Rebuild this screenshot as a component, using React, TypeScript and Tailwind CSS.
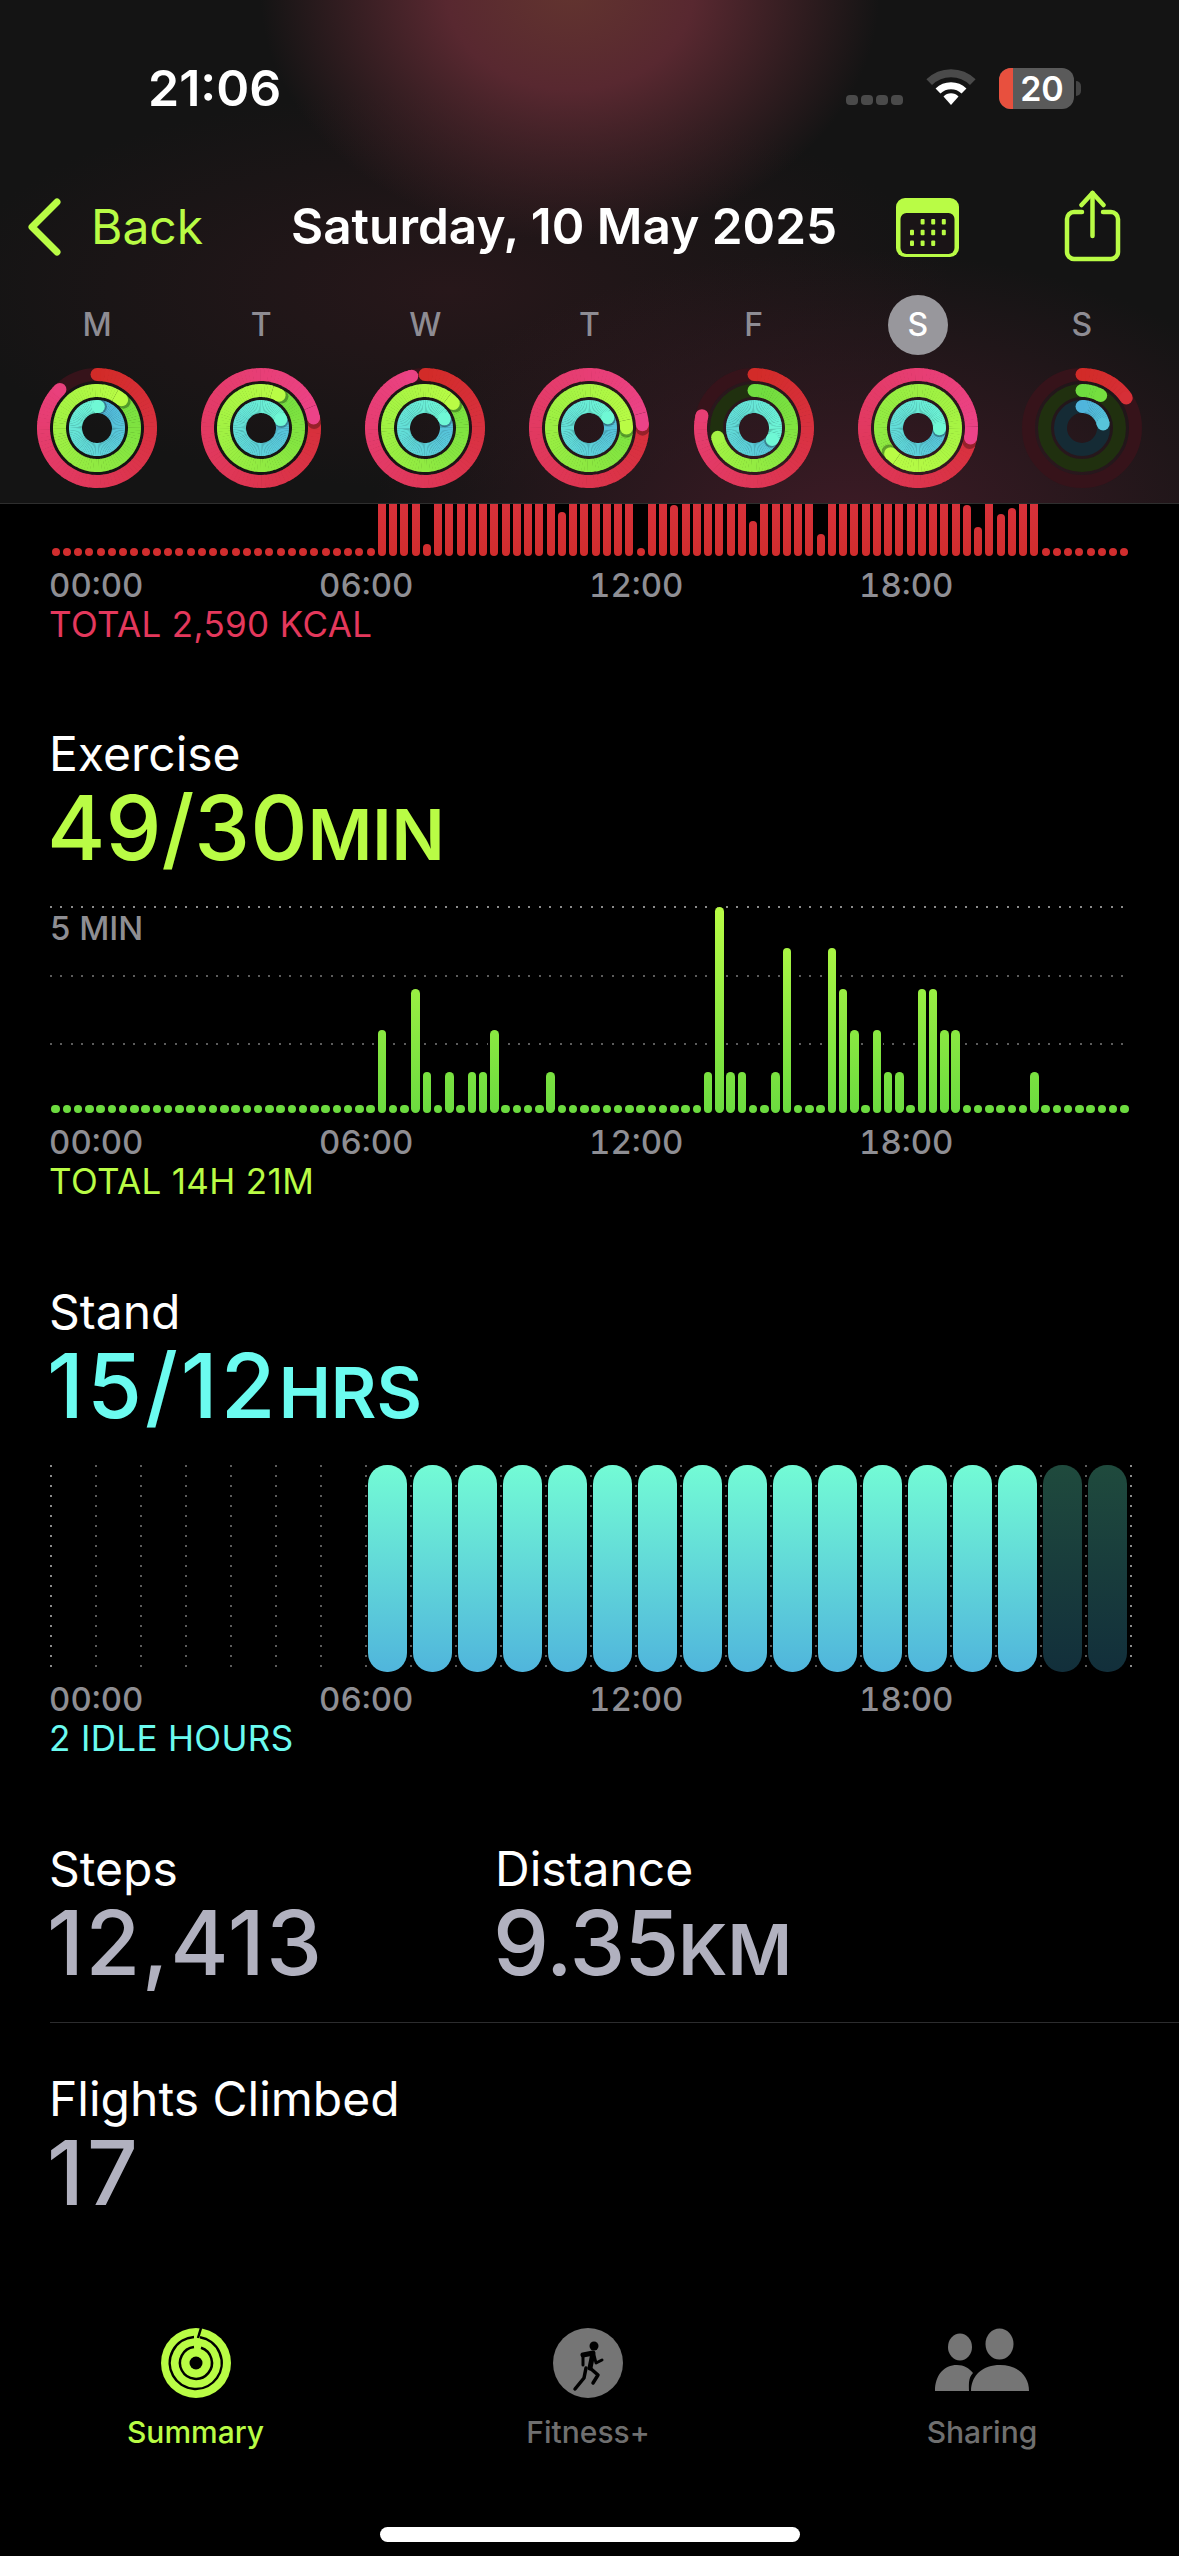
import * as React from 'react';

type RingSpec = { frac: number; from: string; to: string; track: string };

const LIME = '#b9fc45';

const mix = (a: string, b: string, t: number) => {
  const pa = [1, 3, 5].map((i) => parseInt(a.slice(i, i + 2), 16));
  const pb = [1, 3, 5].map((i) => parseInt(b.slice(i, i + 2), 16));
  return `rgb(${pa.map((v, i) => Math.round(v + (pb[i] - v) * t)).join(',')})`;
};

const polar = (r: number, turns: number): [number, number] => {
  const a = turns * Math.PI * 2;
  return [60 + r * Math.sin(a), 60 - r * Math.cos(a)];
};

function Ring({ r, spec }: { r: number; spec: RingSpec }) {
  const { frac, from, to, track } = spec;
  const start = Math.max(0, frac - 1);
  const span = Math.max(frac, 1);
  const step = 1 / 90;
  const segs: React.ReactNode[] = [];
  const tail = frac >= 1 ? frac - step * 3 : frac;
  for (let a = start; a < tail; a += step) {
    const [x1, y1] = polar(r, a);
    const [x2, y2] = polar(r, Math.min(a + step * 1.15, tail));
    segs.push(<path key={a} d={`M${x1} ${y1}A${r} ${r} 0 0 1 ${x2} ${y2}`} stroke={mix(from, to, a / span)} strokeWidth={13} fill="none" />);
  }
  const [sx, sy] = polar(r, start);
  const [tx, ty] = polar(r, frac);
  const [shx, shy] = polar(r, frac + 0.012);
  const [bx, by] = polar(r, tail);
  return (
    <g>
      <circle cx={60} cy={60} r={r} stroke={track} strokeWidth={13} fill="none" />
      {frac < 1 && <circle cx={sx} cy={sy} r={6.5} fill={from} />}
      {segs}
      {frac >= 1 && <circle cx={shx} cy={shy} r={7} fill="#000" opacity={0.3} />}
      {frac >= 1 && <path d={`M${bx} ${by}A${r} ${r} 0 0 1 ${tx} ${ty}`} stroke={to} strokeWidth={13} fill="none" />}
      <circle cx={tx} cy={ty} r={6.5} fill={frac >= 1 ? to : mix(from, to, frac / span)} />
    </g>
  );
}

function Rings({ move, ex, stand }: { move: number; ex: number; stand: number }) {
  return (
    <svg width={120} height={120} viewBox="0 0 120 120" className="block">
      <Ring r={53.5} spec={{ frac: move, from: '#d22b28', to: '#ec4388', track: '#36131a' }} />
      <Ring r={37.5} spec={{ frac: ex, from: '#6fdc3f', to: LIME, track: '#20300f' }} />
      <Ring r={21.5} spec={{ frac: stand, from: '#50b5dc', to: '#6ff8d5', track: '#152b35' }} />
    </svg>
  );
}

const days = [
  { l: 'M', move: 0.878, ex: 1.114, stand: 1.01 },
  { l: 'T', move: 1.22, ex: 1.08, stand: 1.186 },
  { l: 'W', move: 0.96, ex: 1.136, stand: 1.18 },
  { l: 'T', move: 1.24, ex: 1.25, stand: 1.17 },
  { l: 'F', move: 0.787, ex: 0.71, stand: 1.34 },
  { l: 'S', move: 1.28, ex: 1.63, stand: 1.255, active: true },
  { l: 'S', move: 0.155, ex: 0.083, stand: 0.22 },
];

const redShort: Record<number, number> = { 33: 12, 45: 44, 55: 51, 62: 35, 68: 22, 81: 51, 82: 29, 84: 42, 85: 48 };
const redDots = [52, 88, 89, 90, 91, 92, 93, 94, 95];
const greenBars: Record<number, number> = {
  29: 2, 32: 3, 33: 1, 35: 1, 37: 1, 38: 1, 39: 2, 44: 1, 58: 1, 59: 5, 60: 1, 61: 1, 64: 1, 65: 4,
  69: 4, 70: 3, 71: 2, 73: 2, 74: 1, 75: 1, 77: 3, 78: 3, 79: 2, 80: 2, 87: 1,
};
const quarters = Array.from({ length: 96 }, (_, i) => i);

function Axis() {
  return (
    <div className="ml-[-1px] grid h-[40px] w-[1080px] grid-cols-4 items-center text-[33px] font-medium tabular-nums text-[#8e8e93]">
      <span>00:00</span>
      <span>06:00</span>
      <span>12:00</span>
      <span>18:00</span>
    </div>
  );
}

function Value({ v, unit, className, numClass = '' }: { v: string; unit?: string; className: string; numClass?: string }) {
  return (
    <div className={`ml-[-3px] flex h-[88px] items-baseline font-medium leading-[88px] ${className}`}>
      <span className={`text-[89px] ${numClass}`}>{v}</span>
      {unit && <span className="text-[70px] font-semibold">{unit}</span>}
    </div>
  );
}

function Label({ children }: { children: React.ReactNode }) {
  return <div className="ml-[-1px] flex h-[60px] items-center text-[48px] text-white">{children}</div>;
}

function Total({ children, className }: { children: React.ReactNode; className: string }) {
  return <div className={`ml-[-1px] mt-[3px] flex h-[41px] items-center text-[35px] tracking-[0.01em] ${className}`}>{children}</div>;
}

function Status() {
  return (
    <div className="flex h-[176px] items-center pl-[148px] pr-[98px] text-white">
      <span className="text-[50px] font-semibold">21:06</span>
      <div className="ml-auto flex items-center">
        <div className="mt-[24px] flex gap-[3px]">
          {[0, 1, 2, 3].map((i) => (
            <span key={i} className="h-[10px] w-[12px] rounded-[4px] bg-[#4a4a4a]" />
          ))}
        </div>
        <svg width={50} height={38} viewBox="0 0 50 38" className="ml-[23px] mt-[-2px]">
          <path d="M3.2 14.2A31 31 0 0 1 46.8 14.2" stroke="#4a4a4a" strokeWidth={8} fill="none" />
          <path d="M12 23A18.5 18.5 0 0 1 38 23" stroke="#fff" strokeWidth={7} fill="none" />
          <path d="M25 37L17.5 28.5A10.5 10.5 0 0 1 32.5 28.5Z" fill="#fff" />
        </svg>
        <div className="ml-[23px] flex h-[41px] w-[75px] overflow-hidden rounded-[12px] bg-[#5a5a5a]">
          <span className="w-[14px] bg-[#e8503e]" />
          <span className="flex-1 pr-[3px] text-center text-[34px] font-semibold leading-[41px]">20</span>
        </div>
        <span className="ml-[2px] h-[15px] w-[5px] rounded-r-full bg-[#444]" />
      </div>
    </div>
  );
}

function CalendarIcon() {
  const rows = [
    [1, 2, 3],
    [0, 1, 2, 3],
    [0, 1, 2],
  ];
  return (
    <svg width={63} height={59} viewBox="0 0 63 59">
      <rect width={63} height={59} rx={9} fill={LIME} />
      <rect x={4.5} y={15} width={54} height={41} rx={6} fill="#1a1416" />
      {rows.map((cols, y) =>
        cols.map((x) => <rect key={`${x}-${y}`} x={14 + x * 10.6} y={21 + y * 10.7} width={4} height={5.5} rx={1} fill={LIME} />),
      )}
    </svg>
  );
}

function ShareIcon() {
  return (
    <svg width={57} height={72} viewBox="0 0 57 72" fill="none" stroke={LIME} strokeWidth={4.5} strokeLinecap="round" strokeLinejoin="round">
      <path d="M18 22H10a7 7 0 0 0-7 7v33a7 7 0 0 0 7 7h37a7 7 0 0 0 7-7V29a7 7 0 0 0-7-7h-8" />
      <path d="M28.5 3V46" />
      <path d="M17.5 15L28.5 3L39.5 15" />
    </svg>
  );
}

function Header() {
  return (
    <header className="h-[504px] border-b border-[#2e2e2e] bg-[radial-gradient(ellipse_310px_250px_at_570px_-10px,#62342f,#582830_40%,transparent),radial-gradient(ellipse_480px_280px_at_850px_530px,#3e1b26,transparent),radial-gradient(ellipse_500px_200px_at_450px_290px,#27171a,transparent),linear-gradient(#141414,#141414)]">
      <Status />
      <div className="flex h-[102px] items-center">
        <div className="flex w-[292px] items-center pl-[28px]">
          <svg width={34} height={58} viewBox="0 0 34 58" fill="none" stroke={LIME} strokeWidth={7} strokeLinecap="round" strokeLinejoin="round">
            <path d="M29 4L4 29L29 54" />
          </svg>
          <span className="ml-[29px] text-[48px] leading-none text-[#b9fc45]">Back</span>
        </div>
        <h1 className="ml-[-1px] w-[605px] text-[49.5px] font-semibold leading-none text-white">Saturday, 10 May 2025</h1>
        <CalendarIcon />
        <div className="ml-[105px] mt-[-3px]">
          <ShareIcon />
        </div>
      </div>
      <div className="mt-[17px] grid grid-cols-7 px-[15px]">
        {days.map((d, i) => (
          <div key={i} className="flex flex-col items-center">
            <span className={`flex h-[60px] w-[60px] items-center justify-center rounded-full text-[32px] font-medium ${d.active ? 'bg-[#98979c] text-white' : 'text-[#8e8c93]'}`}>{d.l}</span>
            <div className="mt-[13px]">
              <Rings move={d.move} ex={d.ex} stand={d.stand} />
            </div>
          </div>
        ))}
      </div>
    </header>
  );
}

function DottedLine({ strong }: { strong?: boolean }) {
  return (
    <div className={`h-[2px] ${strong ? 'bg-[repeating-linear-gradient(90deg,#8c8c8c_0_2px,transparent_2px_10.4px)]' : 'bg-[repeating-linear-gradient(90deg,#5c5c5c_0_2px,transparent_2px_10.4px)]'}`} />
  );
}

function TabBar() {
  return (
    <nav className="flex h-[228px] flex-col">
      <div className="grid grid-cols-[391px_394px_394px] text-center text-[30px] font-medium">
        <div className="flex flex-col items-center text-[#b9fc45]">
          <svg width={70} height={70} viewBox="0 0 70 70">
            <circle cx={35} cy={35} r={35} fill={LIME} />
            <path d="M39 9.3A26 26 0 1 1 33 9" stroke="#000" strokeWidth={2.5} fill="none" />
            <path d="M40 19.7A16 16 0 1 1 33 19" stroke="#000" strokeWidth={2.5} fill="none" />
            <circle cx={35} cy={35} r={6.5} fill="#000" />
            <path d="M40 0L37 10" stroke="#000" strokeWidth={2.5} />
          </svg>
          <span className="mt-[14px] leading-[40px]">Summary</span>
        </div>
        <div className="flex flex-col items-center text-[#6f6f6f]">
          <svg width={70} height={70} viewBox="0 0 70 70" fill="none" stroke="#000" strokeWidth={3} strokeLinecap="round" strokeLinejoin="round">
            <circle cx={35} cy={35} r={35} fill="#757575" stroke="none" />
            <circle cx={41} cy={18} r={4.5} fill="#000" stroke="none" />
            <path d="M30 27L40 25L37 40" strokeWidth={5} />
            <path d="M30 27L30 37" />
            <path d="M41 27L43 35L49 32" />
            <path d="M37 40L45 47L40 55" strokeWidth={3.5} />
            <path d="M33 40L31 50L22 61" strokeWidth={3.5} />
          </svg>
          <span className="mt-[14px] leading-[40px]">Fitness+</span>
        </div>
        <div className="flex flex-col items-center text-[#6f6f6f]">
          <svg width={94} height={70} viewBox="0 0 94 70" fill="#757575">
            <ellipse cx={25} cy={19} rx={12} ry={13.5} />
            <ellipse cx={64.5} cy={16} rx={14} ry={15.5} />
            <path d="M0 63C0 47 9 37 22 37C29 37 34 40 38 45C33 50 34 57 34 63Z" />
            <path d="M36 63C36 47 48 37 65 37C82 37 94 47 94 63Z" />
          </svg>
          <span className="mt-[14px] leading-[40px]">Sharing</span>
        </div>
      </div>
      <div className="mx-auto mt-[75px] h-[15px] w-[420px] rounded-full bg-white" />
    </nav>
  );
}

export default function App() {
  return (
    <div className="flex h-[2556px] w-[1179px] flex-col overflow-hidden bg-black font-[Inter,sans-serif]">
      <Header />
      <main className="flex-1 pl-[50px]">
        {/* move chart is scrolled under the header, only the lower edge shows */}
        <div className="grid h-[52px] w-[1080px] grid-cols-[repeat(96,1fr)] grid-rows-[52px] items-end overflow-hidden">
          {quarters.map((i) => {
            const dot = i < 29 || redDots.includes(i);
            const h = dot ? 8 : redShort[i] ?? 80;
            return (
              <div key={i} className="flex justify-center">
                <div className="w-2 shrink-0 rounded-full bg-[linear-gradient(to_top,#d02d2d,#d9323c_60px)]" style={{ height: h }} />
              </div>
            );
          })}
        </div>
        <div className="mt-[5px]"><Axis /></div>
        <Total className="text-[#e4385c]">TOTAL 2,590 KCAL</Total>

        <div className="mt-[79px]"><Label>Exercise</Label></div>
        <Value v="49/30" unit="MIN" className="text-[#b9fc45]" />
        <div className="relative mt-[34px] h-[207px] w-[1080px]">
          <div className="absolute inset-x-0 top-0 flex flex-col gap-[66.5px]">
            <DottedLine strong />
            <DottedLine />
            <DottedLine />
          </div>
          <span className="absolute left-0 top-[2px] text-[33px] font-medium leading-[40px] text-[#8e8e93]">5 MIN</span>
          <div className="relative grid h-full grid-cols-[repeat(96,1fr)] items-end">
            {quarters.map((i) => {
              const lvl = greenBars[i];
              return (
                <div key={i} className="flex justify-center">
                  <div className={`w-[8.5px] shrink-0 rounded-full bg-[linear-gradient(to_top,#6bdb3f,#b9fc45_207px)] ${lvl ? 'shadow-[0_0_0_2px_#000]' : ''}`} style={{ height: lvl ? lvl * 41.3 : 8.5 }} />
                </div>
              );
            })}
          </div>
        </div>
        <div className="mt-[5px]"><Axis /></div>
        <Total className="text-[#b9fc45]">TOTAL 14H 21M</Total>

        <div className="mt-[80px]"><Label>Stand</Label></div>
        <Value v="15/12" unit="HRS" className="text-[#6bfbf0]" numClass="tracking-[3px]" />
        <div className="mt-[35px] grid h-[207px] grid-cols-[repeat(24,45px)_2px]">
          {Array.from({ length: 25 }, (_, h) => (
            <div key={h} className={`bg-[length:2px_203px] bg-no-repeat ${h === 0 || h === 24 ? 'bg-[repeating-linear-gradient(180deg,#8c8c8c_0_2px,transparent_2px_10px)]' : 'bg-[repeating-linear-gradient(180deg,#5c5c5c_0_2px,transparent_2px_10px)]'}`}>
              {h >= 7 && h < 24 && (
                <div className={`ml-[3px] h-full w-[39px] rounded-[19px] ${h < 22 ? 'bg-[linear-gradient(#73fbd5,#50b5dc)]' : 'bg-[linear-gradient(#1f4a3d,#122f3b)]'}`} />
              )}
            </div>
          ))}
        </div>
        <div className="mt-[3px]"><Axis /></div>
        <div className="mt-[2px]">
          <Total className="text-[#6bfbf0]">2 IDLE HOURS</Total>
        </div>

        <div className="mt-[80px] flex">
          <div className="w-[446px]">
            <Label>Steps</Label>
            <Value v="12,413" className="text-[#b1b1bf]" numClass="tracking-[1.5px]" />
          </div>
          <div>
            <Label>Distance</Label>
            <Value v="9.35" unit="KM" className="text-[#b1b1bf]" numClass="tracking-[-1px]" />
          </div>
        </div>
        <div className="mt-[35px] h-px bg-[#2c2c2e]" />
        <div className="mt-[46px]"><Label>Flights Climbed</Label></div>
        <Value v="17" className="text-[#b1b1bf]" numClass="tracking-[3px]" />
      </main>
      <TabBar />
    </div>
  );
}
